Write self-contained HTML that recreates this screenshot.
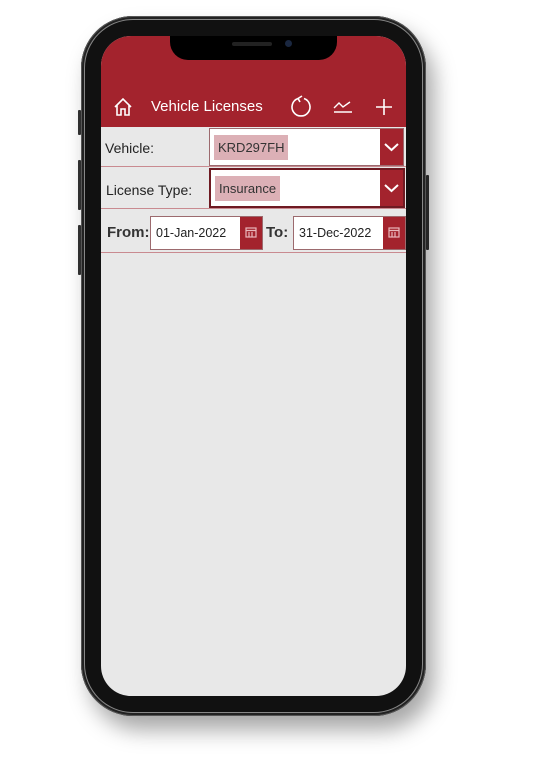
<!DOCTYPE html>
<html><head><meta charset="utf-8"><style>
body{margin:0;width:540px;height:761px;background:#fff;position:relative;overflow:hidden;font-family:"Liberation Sans",sans-serif}
.phone{position:absolute;left:81px;top:16px;width:345px;height:700px;border-radius:52px;background:#111;box-shadow:0 0 0 1px #555 inset,0 0 0 3px #222 inset,0 0 0 4px #888 inset,8px 14px 22px rgba(0,0,0,.35)}
.btn{position:absolute;width:3px;background:#333;border-radius:1px}
.screen{position:absolute;left:101px;top:36px;width:305px;height:660px;border-radius:30px;background:#e8e8e8;overflow:hidden}
.hdr{position:absolute;left:0;top:0;width:305px;height:91px;background:#a3232d}
.notch{position:absolute;left:69px;top:0;width:167px;height:24px;background:#000;border-radius:0 0 18px 18px}
.title{position:absolute;left:50px;top:62px;color:#fff;font-size:15px}
.row{position:absolute;left:0;width:305px;border-bottom:1px solid #c98a90}
.lbl{position:absolute;font-size:14px;color:#222}
.box{position:absolute;background:#fff;border:1px solid #9c6a6e;box-sizing:border-box}
.dd{position:absolute;right:0;top:0;bottom:0;width:23px;background:#a3232d}
.hl{position:absolute;left:4px;top:6px;height:25px;background:#dcb0b6;font-size:13px;color:#333;line-height:25px;padding:0 4px}
.dt{position:absolute;font-size:12.5px;color:#222;top:9px;left:5px}
</style></head><body>
<div class="btn" style="left:78px;top:110px;height:25px"></div>
<div class="btn" style="left:78px;top:160px;height:50px"></div>
<div class="btn" style="left:78px;top:225px;height:50px"></div>
<div class="btn" style="left:426px;top:175px;height:75px"></div>
<div class="phone"></div>
<div class="screen">
 <div class="hdr"></div>
 <div class="notch"><div style="position:absolute;left:62px;top:6px;width:40px;height:4px;border-radius:2px;background:#222"></div><div style="position:absolute;left:115px;top:4px;width:7px;height:7px;border-radius:50%;background:#1a2740"></div></div>
 <svg style="position:absolute;left:12px;top:61px" width="20" height="20" viewBox="0 0 20 20" fill="none" stroke="#fff" stroke-width="1.6"><path d="M2 10L10 2L18 10M4 8V18H8V12H12V18H16V8"/></svg>
 <div class="title">Vehicle Licenses</div>
 <svg style="position:absolute;left:188px;top:59px" width="24" height="24" viewBox="0 0 24 24" fill="none" stroke="#fff" stroke-width="1.6"><path d="M9 3.5A9 9 0 1 0 15 3.5M9 3.5L13 1M9 3.5L11 7"/></svg>
 <svg style="position:absolute;left:232px;top:63px" width="20" height="14" viewBox="0 0 20 14" fill="none" stroke="#fff" stroke-width="1.4"><path d="M1 9L6 4L10 8L17 3M1 13H19"/></svg>
 <svg style="position:absolute;left:273px;top:61px" width="20" height="20" viewBox="0 0 20 20" stroke="#fff" stroke-width="1.6"><path d="M10 2V18M2 10H18"/></svg>
 <div class="row" style="top:91px;height:39px"></div>
 <div class="lbl" style="left:4px;top:104px">Vehicle:</div>
 <div class="box" style="left:108px;top:92px;width:195px;height:38px"><div class="hl" style="left:4px;top:6px">KRD297FH</div><div class="dd"><svg width="23" height="36" viewBox="0 0 23 36" fill="none" stroke="#fff" stroke-width="2"><path d="M5 15L11.5 21L18 15"/></svg></div></div>
 <div class="row" style="top:131px;height:41px"></div>
 <div class="lbl" style="left:5px;top:146px">License Type:</div>
 <div class="box" style="left:108px;top:132px;width:196px;height:40px;border:2px solid #6e1a22"><div class="hl" style="left:4px;top:6px">Insurance</div><div class="dd"><svg width="23" height="36" viewBox="0 0 23 36" fill="none" stroke="#fff" stroke-width="2"><path d="M5 15L11.5 21L18 15"/></svg></div></div>
 <div class="row" style="top:173px;height:43px"></div>
 <div class="lbl" style="left:6px;top:188px;font-size:15px;font-weight:bold;color:#333">From:</div>
 <div class="box" style="left:49px;top:180px;width:113px;height:34px"><div class="dt">01-Jan-2022</div><div class="dd" style="width:22px"><svg width="22" height="32" viewBox="0 0 22 32" fill="none" stroke="#e9b8bc" stroke-width="1.2"><rect x="6" y="11" width="10" height="9"/><path d="M6 13.5H16M9 15V20M12 15V20"/></svg></div></div>
 <div class="lbl" style="left:165px;top:188px;font-size:15px;font-weight:bold;color:#333">To:</div>
 <div class="box" style="left:192px;top:180px;width:113px;height:34px"><div class="dt">31-Dec-2022</div><div class="dd" style="width:22px"><svg width="22" height="32" viewBox="0 0 22 32" fill="none" stroke="#e9b8bc" stroke-width="1.2"><rect x="6" y="11" width="10" height="9"/><path d="M6 13.5H16M9 15V20M12 15V20"/></svg></div></div>
</div>
</body></html>
